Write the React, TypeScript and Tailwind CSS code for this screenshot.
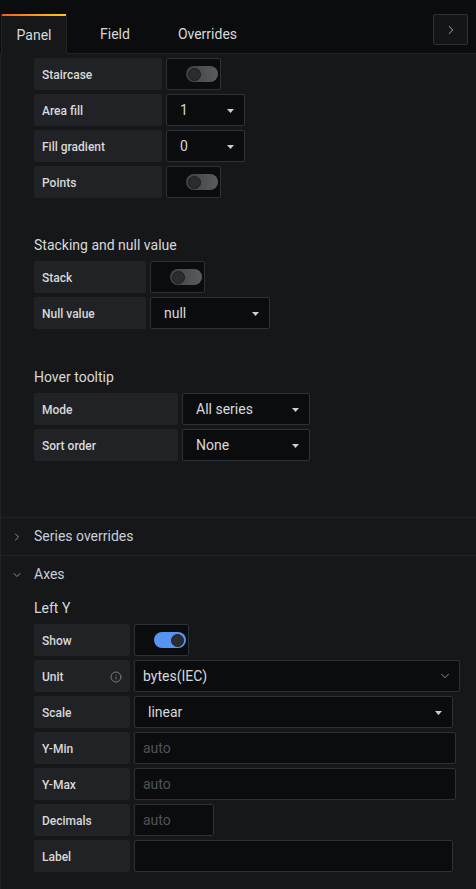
import type { ReactNode } from 'react';
import { ChevronDown, ChevronRight, Info } from 'lucide-react';

function Caret() {
  return (
    <svg width="7" height="4" viewBox="0 0 7 4" className="shrink-0 mt-[2px]">
      <polygon points="0,0 7,0 3.5,4" fill="#c7d0d9" />
    </svg>
  );
}

function Row({ label, labelW, info, children }: { label: string; labelW: string; info?: boolean; children: ReactNode }) {
  return (
    <div className="flex gap-1">
      <div
        className={`${labelW} h-8 shrink-0 flex items-center justify-between pl-2 pr-2 pt-px bg-[#202226] rounded-[2px] text-[12px] font-medium text-[#d8d9da]`}
      >
        <span>{label}</span>
        {info && <Info size={12} strokeWidth={1.6} className="text-[#8e8e8e]" />}
      </div>
      {children}
    </div>
  );
}

function Toggle({ on }: { on?: boolean }) {
  return (
    <div className="w-[55px] h-8 flex items-center justify-end pr-[2px] bg-[#0b0c0e] border border-[#2c3235] rounded-[2px]">
      <div
        className={`w-8 h-4 rounded-full flex items-center px-[2px] ${
          on ? 'justify-end bg-[#5794f2]' : 'justify-start bg-gradient-to-r from-[#3f4245] to-[#5a5c5f]'
        }`}
      >
        <div className="w-[13px] h-[13px] rounded-full bg-[#2a2c2f] border border-[#1c1d20]" />
      </div>
    </div>
  );
}

function Select({ w, value }: { w: string; value: string }) {
  return (
    <div
      className={`${w} h-8 flex items-center justify-between pl-[13px] pr-[10px] bg-[#0b0c0e] border border-[#2c3235] rounded-[2px] text-[14px] text-[#d8d9da]`}
    >
      <span>{value}</span>
      <Caret />
    </div>
  );
}

function Input({ w, placeholder }: { w: string; placeholder?: string }) {
  return (
    <div
      className={`${w} h-8 flex items-center pl-2 bg-[#0b0c0e] border border-[#2c3235] rounded-[2px] text-[14px] text-[#4f5358]`}
    >
      {placeholder}
    </div>
  );
}

function Heading({ children, className }: { children: ReactNode; className: string }) {
  return <div className={`h-5 leading-5 text-[14px] text-[#d8d9da] ${className}`}>{children}</div>;
}

export default function App() {
  return (
    <div className="w-[476px] h-[889px] overflow-hidden bg-[#0b0c0e] font-['Roboto',sans-serif] flex flex-col">
      {/* Tabs */}
      <div className="h-[54px] shrink-0 flex items-end justify-between border-b border-[#202226] pr-2">
        <div className="flex items-end">
          <div className="ml-px -mb-px h-[40px] w-[66px] flex flex-col bg-[#161719] border-x border-[#202226]">
            <div className="h-[2px] bg-gradient-to-r from-[#f05a28] to-[#fbca0a]" />
            <div className="flex-1 flex items-center justify-center pt-px text-[14px] text-[#d8d9da]">Panel</div>
          </div>
          <div className="h-[40px] flex items-center pt-[3px] ml-[17px] px-4 text-[14px] text-[#d8d9da]">Field</div>
          <div className="h-[40px] flex items-center pt-[3px] ml-[16px] px-4 text-[14px] text-[#d8d9da]">Overrides</div>
        </div>
        <div className="mb-2 w-[35px] h-[31px] flex items-center justify-center bg-[#141518] border border-[#2c3235] rounded-[2px]">
          <ChevronRight size={14} strokeWidth={1.8} className="text-[#8e8e8e]" />
        </div>
      </div>

      {/* Content */}
      <div className="flex-1 bg-[#161719] border-l border-[#202226]">
        <div className="pl-[33px] pt-1 pb-[56px]">
          <div className="flex flex-col gap-1">
            <Row label="Staircase" labelW="w-[128px]"><Toggle /></Row>
            <Row label="Area fill" labelW="w-[128px]"><Select w="w-[79px]" value="1" /></Row>
            <Row label="Fill gradient" labelW="w-[128px]"><Select w="w-[79px]" value="0" /></Row>
            <Row label="Points" labelW="w-[128px]"><Toggle /></Row>
          </div>

          <Heading className="mt-[37px] mb-[6px]">Stacking and null value</Heading>
          <div className="flex flex-col gap-1">
            <Row label="Stack" labelW="w-[112px]"><Toggle /></Row>
            <Row label="Null value" labelW="w-[112px]"><Select w="w-[120px]" value="null" /></Row>
          </div>

          <Heading className="mt-[38px] mb-[6px]">Hover tooltip</Heading>
          <div className="flex flex-col gap-1">
            <Row label="Mode" labelW="w-[144px]"><Select w="w-[128px]" value="All series" /></Row>
            <Row label="Sort order" labelW="w-[144px]"><Select w="w-[128px]" value="None" /></Row>
          </div>
        </div>

        <div className="h-[38px] border-t border-[#202226] flex items-center pl-[10px] text-[14px] text-[#c7d0d9]">
          <ChevronRight size={12} strokeWidth={2} className="text-[#8e8e8e] mr-[11px]" />
          Series overrides
        </div>
        <div className="h-[38px] border-t border-[#202226] flex items-center pl-[10px] text-[14px] text-[#c7d0d9]">
          <ChevronDown size={12} strokeWidth={2} className="text-[#8e8e8e] mr-[11px]" />
          Axes
        </div>

        <div className="pl-[33px]">
          <Heading className="mt-[5px] mb-[6px]">Left Y</Heading>
          <div className="flex flex-col gap-1">
            <Row label="Show" labelW="w-[96px]"><Toggle on /></Row>
            <Row label="Unit" labelW="w-[96px]" info>
              <div className="w-[326px] h-8 flex items-center justify-between pl-2 pr-[7px] bg-[#0b0c0e] border border-[#2c3235] rounded-[2px] text-[14px] text-[#d8d9da]">
                <span>bytes(IEC)</span>
                <ChevronDown size={14} strokeWidth={1.6} className="text-[#8e8e8e]" />
              </div>
            </Row>
            <Row label="Scale" labelW="w-[96px]"><Select w="w-[319px]" value="linear" /></Row>
            <Row label="Y-Min" labelW="w-[96px]"><Input w="w-[322px]" placeholder="auto" /></Row>
            <Row label="Y-Max" labelW="w-[96px]"><Input w="w-[322px]" placeholder="auto" /></Row>
            <Row label="Decimals" labelW="w-[96px]"><Input w="w-[80px]" placeholder="auto" /></Row>
            <Row label="Label" labelW="w-[96px]"><Input w="w-[319px]" /></Row>
          </div>
        </div>
      </div>
    </div>
  );
}
